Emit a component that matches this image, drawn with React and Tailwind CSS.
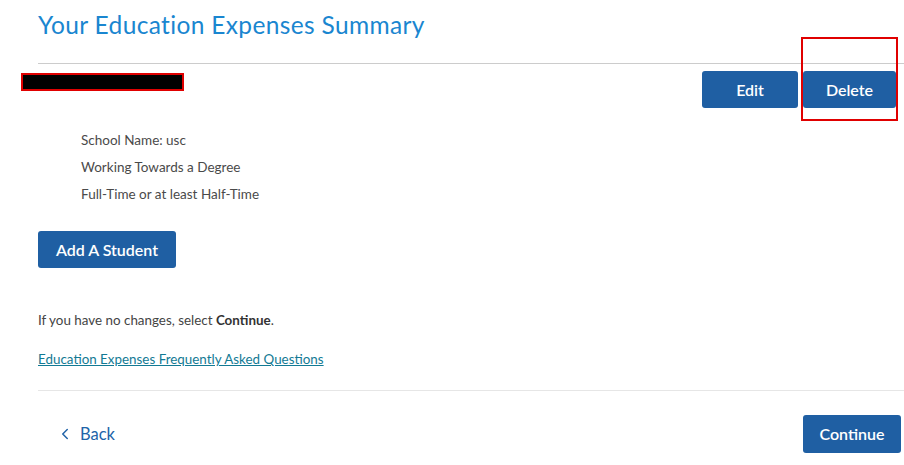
import { ChevronLeft } from "lucide-react";

const btn =
  "bg-[#1f5fa3] text-white font-semibold rounded-[3px] flex items-center justify-center";

export default function App() {
  return (
    <main
      className="relative w-[904px] h-[465px] bg-white overflow-hidden text-[#444]"
      style={{ fontFamily: "Lato, 'Noto Sans', sans-serif" }}
    >
      {/* Title */}
      <div className="pl-[38px] pt-[10px]">
        <h1 className="text-[24.5px] leading-[30px] text-[#1a86d0] tracking-[0.35px]">
          Your Education Expenses Summary
        </h1>
      </div>
      <div className="ml-[38px] mt-[23px] h-px bg-[#cccccc]" />

      {/* Student row */}
      <div className="flex justify-between items-start pl-[21px] pr-[8px] mt-[7px]">
        <div className="mt-[2px] w-[163px] h-[18px] bg-black border-2 border-[#e00000]" />
        <div className="flex gap-[5px]">
          <button className={`${btn} w-[96px] h-[37px] text-[16px]`}>Edit</button>
          <button className={`${btn} w-[93px] h-[37px] text-[16px]`}>Delete</button>
        </div>
      </div>

      {/* Details */}
      <div className="pl-[81px] mt-[19px] text-[13.5px] leading-[27px] text-[#4a4a4a]">
        <p>School Name: usc</p>
        <p>Working Towards a Degree</p>
        <p>Full-Time or at least Half-Time</p>
      </div>

      <div className="pl-[38px] mt-[23px]">
        <button className={`${btn} w-[138px] h-[37px] text-[16px]`}>Add A Student</button>
      </div>

      <p className="pl-[38px] mt-[42px] text-[13.4px] leading-[20px] text-[#444]">
        If you have no changes, select <span className="font-bold text-[#333]">Continue</span>.
      </p>

      <p className="pl-[38px] mt-[19px] text-[13.4px] leading-[20px]">
        <a href="#" className="text-[#127a94] underline">
          Education Expenses Frequently Asked Questions
        </a>
      </p>

      <div className="ml-[38px] mt-[21px] h-px bg-[#e6e6e6]" />

      {/* Footer */}
      <div className="flex justify-between items-center pl-[56px] pr-[3px] mt-[24px]">
        <button className="flex items-center gap-[6px] text-[#2163a8] text-[16.5px]">
          <ChevronLeft size={18} strokeWidth={2} />
          <span>Back</span>
        </button>
        <button className={`${btn} w-[98px] h-[38px] text-[16px]`}>Continue</button>
      </div>

      {/* annotation box */}
      <div className="absolute left-[801px] top-[37px] w-[97px] h-[84px] border-2 border-[#e00000] pointer-events-none" />
    </main>
  );
}
